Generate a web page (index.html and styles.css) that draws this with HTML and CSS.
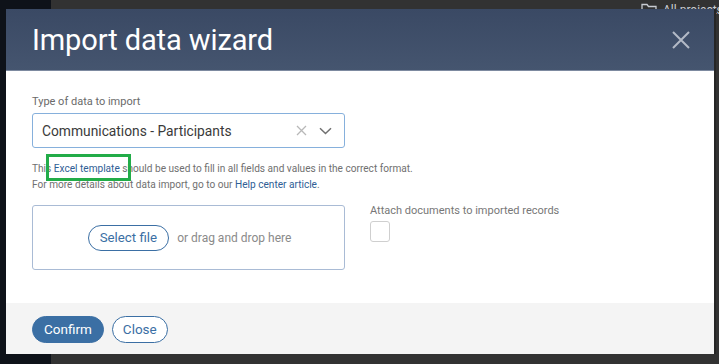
FILE: index.html
```html
<!DOCTYPE html>
<html lang="en">
<head>
<meta charset="utf-8">
<title>Import data wizard</title>
<link rel="stylesheet" href="styles.css">
</head>
<body>
<div class="app">
  <aside class="sidebar"></aside>
  <main class="main">
    <div class="topbar">
      <span class="crumb">
        <svg width="16" height="13" viewBox="0 0 16 13" aria-hidden="true"><path d="M1 1.5h5l1.5 2H15v8.5H1z" fill="none" stroke="#c8ccd2" stroke-width="1.3"/></svg>
        <span class="crumb-text">All projects</span>
      </span>
    </div>
  </main>
</div>

<div class="modal">
  <header class="modal-header">
    <h1 class="modal-title">Import data wizard</h1>
    <button class="modal-close" aria-label="Close">
      <svg width="18" height="18" viewBox="0 0 18 18"><path d="M1 1L17 17M17 1L1 17" stroke="#b3bac6" stroke-width="2" fill="none"/></svg>
    </button>
  </header>

  <section class="modal-body">
    <label class="field-label">Type of data to import</label>
    <div class="select">
      <span class="select-value">Communications - Participants</span>
      <span class="select-icons">
        <svg width="11" height="11" viewBox="0 0 11 11"><path d="M1 1L10 10M10 1L1 10" stroke="#b8b8b8" stroke-width="1.3" fill="none"/></svg>
        <svg width="13" height="8" viewBox="0 0 13 8"><path d="M1 1.2L6.5 6.5L12 1.2" stroke="#707070" stroke-width="1.5" fill="none"/></svg>
      </span>
    </div>

    <p class="help">
      This <a class="link link-highlight" href="#">Excel template</a> should be used to fill in all fields and values in the correct format.<br>
      For more details about data import, go to our <a class="link" href="#">Help center article</a>.
    </p>

    <div class="upload-row">
      <div class="dropzone">
        <button class="btn btn-outline btn-select">Select file</button>
        <span class="drop-text">or drag and drop here</span>
      </div>
      <div class="attach">
        <span class="attach-label">Attach documents to imported records</span>
        <span class="checkbox"></span>
      </div>
    </div>
  </section>

  <footer class="modal-footer">
    <button class="btn btn-primary">Confirm</button>
    <button class="btn btn-outline btn-close">Close</button>
  </footer>
</div>
</body>
</html>
```

FILE: styles.css
```css
* { box-sizing: border-box; }
html, body { margin: 0; padding: 0; }
body {
  width: 719px;
  height: 364px;
  overflow: hidden;
  font-family: Roboto, "Liberation Sans", sans-serif;
  background: #323232;
  position: relative;
}
.app {
  display: flex;
  height: 364px;
}
.sidebar {
  width: 51px;
  background: #0e1219;
}
.main {
  flex: 1;
  background: #323232;
  overflow: hidden;
}
.topbar {
  display: flex;
  height: 20px;
  padding-left: 590px;
}
.crumb {
  display: flex;
  align-items: center;
  gap: 6px;
  color: #c8ccd2;
  font-size: 12px;
  margin-top: -1px;
  white-space: nowrap;
}

.modal {
  position: absolute;
  left: 6px;
  top: 9px;
  width: 708px;
  height: 345px;
  background: #fff;
  display: flex;
  flex-direction: column;
  box-shadow: 2px 0 0 #262626;
}
.modal-header {
  height: 62px;
  background: linear-gradient(180deg, #3a4964 0%, #45556f 100%);
  display: flex;
  align-items: center;
  justify-content: space-between;
  padding: 0 24px 0 26px;
  border-bottom: 1px solid #7d8aa0;
}
.modal-title {
  margin: 0;
  color: #fff;
  font-weight: 400;
  font-size: 29px;
  letter-spacing: -0.1px;
}
.modal-close {
  background: none;
  border: 0;
  padding: 0;
  display: flex;
}

.modal-body {
  flex: 1;
  padding: 24px 26px 0 26px;
}
.field-label {
  display: block;
  font-size: 11px;
  line-height: 13px;
  color: #6a6a6a;
  margin-bottom: 5px;
}
.select {
  width: 313px;
  height: 35px;
  border: 1.5px solid #86b0dc;
  border-radius: 3px;
  display: flex;
  align-items: center;
  justify-content: space-between;
  padding: 0 12px 0 9px;
}
.select-value {
  font-size: 13.8px;
  color: #3a3a3a;
}
.select-icons {
  display: flex;
  align-items: center;
  gap: 12px;
}
.help {
  margin: 13px 0 0 0;
  font-size: 10.1px;
  line-height: 16px;
  color: #707070;
}
.link {
  color: #2f5e95;
  text-decoration: none;
}
.link-highlight {
  position: relative;
}
.link-highlight::after {
  content: "";
  position: absolute;
  left: -8px;
  right: -11px;
  top: -9px;
  bottom: -7px;
  border: 3px solid #22ac48;
}
.upload-row {
  display: flex;
  gap: 25px;
  margin-top: 12px;
}
.dropzone {
  width: 313px;
  height: 65px;
  border: 1px solid #a9bbd5;
  border-radius: 3px;
  display: flex;
  align-items: center;
  justify-content: center;
  gap: 8px;
  padding-left: 2px;
}
.drop-text {
  font-size: 12px;
  color: #8a8a8a;
}
.attach {
  display: flex;
  flex-direction: column;
  gap: 4px;
}
.attach-label {
  font-size: 11px;
  color: #777;
  line-height: 12px;
}
.checkbox {
  width: 20px;
  height: 21px;
  border: 1px solid #cfcfcf;
  border-radius: 3px;
}

.modal-footer {
  height: 51px;
  background: #f4f4f4;
  display: flex;
  align-items: center;
  gap: 8px;
  padding: 1px 26px 0 26px;
}
.btn {
  font-family: Roboto, "Liberation Sans", sans-serif;
  font-size: 13.5px;
  height: 27px;
  border-radius: 14px;
  padding: 0 11px;
  cursor: pointer;
}
.btn-primary {
  background: #3b6fa4;
  border: 1px solid #3b6fa4;
  color: #fff;
}
.btn-outline {
  background: #fff;
  border: 1px solid #3b6fa4;
  color: #3b6fa4;
}
.btn-close {
  padding: 0 10px;
}
.btn-select {
  height: 26px;
  padding: 0 11px;
  font-size: 13.3px;
}
```
